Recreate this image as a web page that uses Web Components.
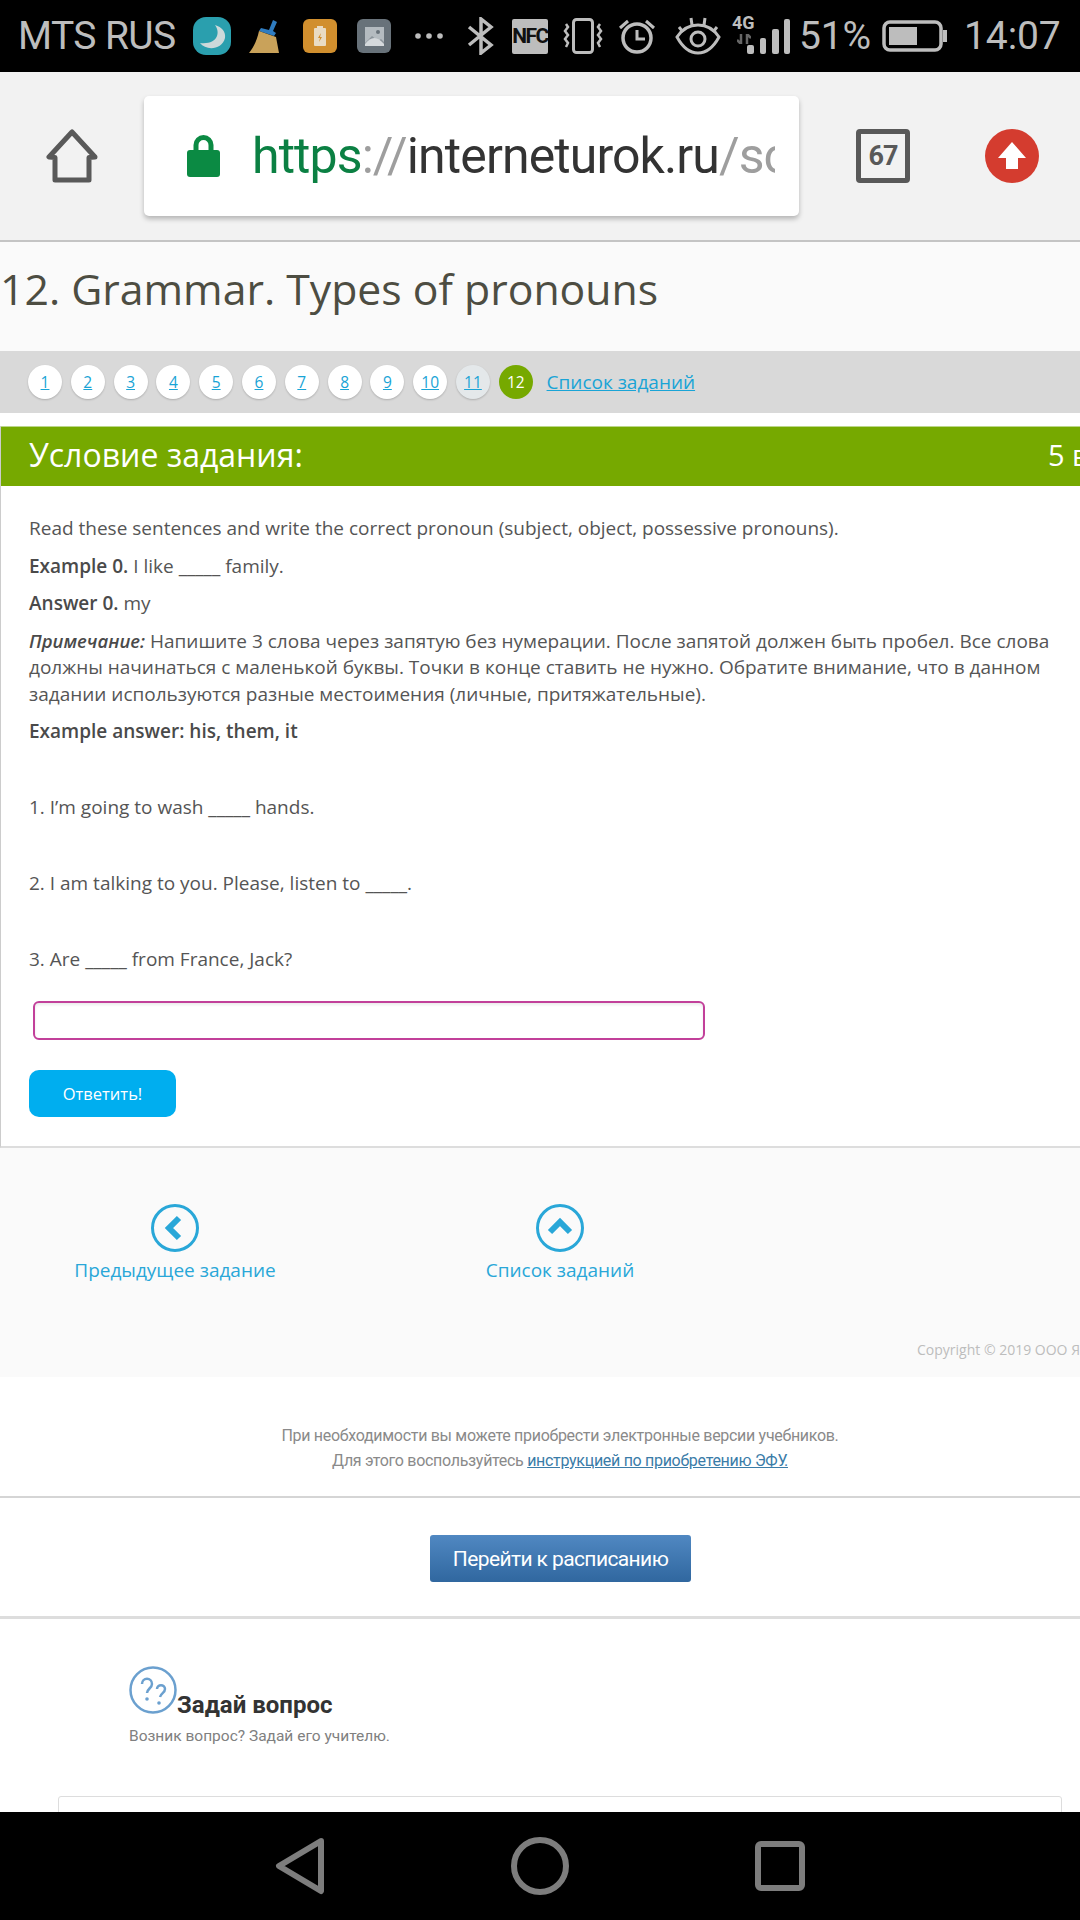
<!DOCTYPE html>
<html lang="ru">
<head>
<meta charset="utf-8">
<title>12. Grammar. Types of pronouns</title>
<style>
html,body{margin:0;padding:0;background:#fff;}
body{width:1080px;height:1920px;overflow:hidden;display:flex;flex-direction:column;font-family:"Open Sans","Noto Sans",sans-serif;}
main-area{flex:1;min-height:0;}
</style>
</head>
<body>
<status-bar></status-bar>
<browser-bar></browser-bar>
<main-area>
  <lesson-title>12. Grammar. Types of pronouns</lesson-title>
  <task-pager current="12" visited="11" total="12"></task-pager>
  <task-card></task-card>
  <task-nav></task-nav>
  <copy-line>Copyright © 2019 ООО Я</copy-line>
  <site-footer></site-footer>
</main-area>
<nav-bar></nav-bar>
<script>
// status bar of the phone
class StatusBar extends HTMLElement{
    constructor(){
        super();
        this.attachShadow({mode:'open'});
    }
    connectedCallback(){
        this.shadowRoot.innerHTML = `
        <style>
        :host{display:flex;height:72px;background:#000;color:#bdbdbd;align-items:center;font-family:Roboto,sans-serif;font-size:39px;overflow:hidden;}
        span{white-space:nowrap;display:block;}
        svg{display:block;flex:none;}
        .carrier{margin-left:18px;width:160px;letter-spacing:-.6px;}
        .nfc{flex:none;margin-left:17px;width:36px;height:35px;background:#bdbdbd;border-radius:2px;color:#111;font-weight:700;font-size:21px;line-height:35px;text-align:center;letter-spacing:-1.500px;overflow:hidden;}
        .net{flex:none;width:26px;margin-left:11px;margin-top:-13px;}
        .net span{font-size:18px;font-weight:700;line-height:16px;}
        </style>
        <span class="carrier">MTS RUS</span>
        <svg width="38" height="38" viewBox="0 0 38 38" style="margin-left:15px"><rect width="38" height="38" rx="13" fill="#2a9fae"/><path d="M22 8c6 8 2 20-15 18 6 8 22 7 25-5 1-6-3-11-10-13z" fill="#cdd9da"/></svg>
        <svg width="33" height="33" viewBox="0 0 33 33" style="margin-left:18px"><path d="M24 0l4 2-4 9 3 2-2 3-15-5 2-3 8 2z" fill="#2f7cc0"/><path d="M10 11l17 6 3 16H0c4-5 8-12 10-22z" fill="#c9a25a"/></svg>
        <svg width="34" height="34" viewBox="0 0 34 34" style="margin-left:21px"><rect width="34" height="34" rx="6" fill="#d18f2e"/><rect x="11" y="9" width="12" height="18" rx="1" fill="#e9dcc4"/><rect x="14" y="7" width="6" height="2" fill="#e9dcc4"/><path d="M18 14l-3 5h2l-1 4 3-5h-2z" fill="#d18f2e"/></svg>
        <svg width="34" height="34" viewBox="0 0 34 34" style="margin-left:20px"><rect width="34" height="34" rx="6" fill="#68727a"/><rect x="8" y="8" width="19" height="19" fill="#b4bbc0"/><path d="M8 24l7-7 6 5 3-2 3 3v4H8z" fill="#68727a" opacity=".55"/><path d="M8 25q9-12 19 0v2H8z" fill="#d5d9dc"/><circle cx="21" cy="13" r="2" fill="#68727a"/></svg>
        <svg width="28" height="6" viewBox="0 0 28 6" style="margin-left:24px"><circle cx="3" cy="3" r="2.800" fill="#bdbdbd"/><circle cx="14" cy="3" r="2.800" fill="#bdbdbd"/><circle cx="25" cy="3" r="2.800" fill="#bdbdbd"/></svg>
        <svg width="28" height="38" viewBox="0 0 28 38" style="margin-left:24px"><path d="M2 10l22 18-10 8V2l10 8L2 28" fill="none" stroke="#bdbdbd" stroke-width="3.500"/></svg>
        <div class="nfc">NFC</div>
        <svg width="40" height="36" viewBox="0 0 40 36" style="margin-left:15px"><rect x="10.500" y="1.500" width="19" height="33" rx="3" fill="none" stroke="#bdbdbd" stroke-width="3"/><path d="M3 6l2 3-3 4 3 4-3 4 3 4-2 4M37 6l-2 3 3 4-3 4 3 4-3 4 2 4" fill="none" stroke="#bdbdbd" stroke-width="2.500"/></svg>
        <svg width="36" height="36" viewBox="0 0 36 36" style="margin-left:16px"><circle cx="18" cy="20" r="14" fill="none" stroke="#bdbdbd" stroke-width="3.500"/><path d="M18 12v9h8M1 10l8-7M35 10l-8-7" fill="none" stroke="#bdbdbd" stroke-width="3"/></svg>
        <svg width="46" height="38" viewBox="0 0 46 38" style="margin-left:20px"><path d="M2 20c6-9 13-12 21-12s15 3 21 12c-6 11-13 16-21 16S8 31 2 20z" fill="none" stroke="#bdbdbd" stroke-width="3"/><circle cx="23" cy="22" r="7" fill="none" stroke="#bdbdbd" stroke-width="3"/><path d="M4 10l4 5M16 1l1 7M30 1l-1 7M42 10l-4 5" stroke="#bdbdbd" stroke-width="3"/></svg>
        <div class="net"><span>4G</span><svg width="14" height="10" viewBox="0 0 14 10" style="margin:3px 0 0 5px"><path d="M4 0v10L0 6M10 10V0l4 4" fill="none" stroke="#666" stroke-width="2.500"/></svg></div>
        <svg width="43" height="35" viewBox="0 0 43 35" style="margin-left:-11px"><rect y="26" width="7" height="9" rx="2" fill="#bdbdbd"/><rect x="13" y="19" width="6" height="16" rx="2" fill="#bdbdbd"/><rect x="25" y="10" width="7" height="25" rx="2" fill="#bdbdbd"/><rect x="37" y="0" width="6" height="35" rx="2" fill="#bdbdbd"/></svg>
        <span style="margin-left:9px;width:71px;letter-spacing:-.2px">51%</span>
        <svg width="66" height="32" viewBox="0 0 66 32" style="margin-left:12px"><rect x="2" y="2" width="57" height="28" rx="6" fill="none" stroke="#bdbdbd" stroke-width="3.500"/><rect x="7" y="7" width="28" height="18" fill="#bdbdbd"/><rect x="61" y="10" width="4" height="12" fill="#bdbdbd"/></svg>
        <span style="margin-left:16px;letter-spacing:-.1px">14:07</span>`;
    }
}
customElements.define('status-bar',StatusBar);

// toolbar of the browser with address
class BrowserBar extends HTMLElement{
    constructor(){
        super();
        this.attachShadow({mode:'open'});
    }
    connectedCallback(){
        this.shadowRoot.innerHTML = `
        <style>
        :host{display:flex;height:170px;box-sizing:border-box;background:#f2f2f2;border-bottom:2px solid #c4c4c4;align-items:center;font-family:Roboto,sans-serif;}
        svg{display:block;flex:none;}
        .url{width:655px;height:120px;box-sizing:border-box;margin-left:45px;background:#fff;border-radius:5px;box-shadow:0 3px 5px rgba(0,0,0,.25);display:flex;align-items:center;padding-left:43px;}
        .text{width:523px;margin-left:32px;overflow:hidden;white-space:nowrap;font-size:50px;letter-spacing:-.9px;color:#333;}
        .g{color:#0b8043}
        .l{color:#9e9e9e}
        .tabs{margin-left:57px;width:54px;height:54px;box-sizing:border-box;border:5px solid #595959;border-radius:4px;display:flex;align-items:center;justify-content:center;font-weight:700;font-size:27px;letter-spacing:-1px;color:#595959;}
        </style>
        <svg width="54" height="54" viewBox="0 0 54 54" style="margin-left:45px"><path d="M27 3L4 28l6 .5V51h34V28.500l6-.5z" fill="none" stroke="#595959" stroke-width="5" stroke-linejoin="round"/></svg>
        <div class="url">
          <svg width="33" height="42" viewBox="0 0 33 42"><path d="M9 17V10a7.500 7.500 0 0 1 15 0v7" fill="none" stroke="#0b8a43" stroke-width="5"/><rect y="15" width="33" height="27" rx="3" fill="#0b8a43"/></svg>
          <div class="text"><span class="g">https</span><span class="l">://</span>interneturok.ru<span class="l">/sc</span></div>
        </div>
        <div class="tabs">67</div>
        <svg width="54" height="54" viewBox="0 0 54 54" style="margin-left:75px"><circle cx="27" cy="27" r="27" fill="#d43c2f"/><path d="M27 13L41 29H33V40H21V29H13z" fill="#fff"/></svg>`;
    }
}
customElements.define('browser-bar',BrowserBar);

class LessonTitle extends HTMLElement{
    constructor(){
        super();
        this.attachShadow({mode:'open'});
        this.shadowRoot.innerHTML = `
        <style>
        :host{display:block;height:109px;background:#fafafa;box-sizing:border-box;padding:18px 0 0 0;}
        h1{margin:0;font-weight:400;font-size:42.750px;line-height:58px;color:#4d4d42;white-space:nowrap;}
        </style>
        <h1><slot></slot></h1>`;
    }
}
customElements.define('lesson-title',LessonTitle);

class TaskPager extends HTMLElement{
    constructor(){
        super();
        this.attachShadow({mode:'open'});
    }
    connectedCallback(){
        let total = +this.getAttribute('total');
        let current = +this.getAttribute('current');
        let visited = +this.getAttribute('visited');
        let items = '';
        for(let i=1;i<=total;i++){
            let cls = i===current ? 'on' : (i===visited ? 'seen' : '');
            items += `<a class="${cls}">${i}</a>`;
        }
        this.shadowRoot.innerHTML = `
        <style>
        :host{display:flex;height:62px;background:#d9d9d9;align-items:center;padding-left:28px;gap:8.800px;margin-bottom:13px;}
        a{display:flex;flex:none;width:34px;height:34px;border-radius:50%;background:#fff;box-shadow:0 1px 2px rgba(0,0,0,.2);align-items:center;justify-content:center;color:#19a4d6;text-decoration:underline;font-size:15.500px;}
        a.seen{background:#e4e8ea}
        a.on{background:#76a900;color:#fff;text-decoration:none;box-shadow:none}
        .all{margin-left:5px;font-size:19px;color:#19a4d6;text-decoration:underline;white-space:nowrap;}
        </style>
        ${items}<span class="all">Список заданий</span>`;
    }
}
customElements.define('task-pager',TaskPager);

class TaskCard extends HTMLElement{
    constructor(){
        super();
        this.attachShadow({mode:'open'});
        this.shadowRoot.innerHTML = `
        <style>
        :host{display:block;background:#fff;border-left:1px solid #ccc;border-bottom:2px solid #ddd;color:#555;font-size:19px;line-height:26.500px;}
        .head{height:60px;background:#76a900;color:#fff;display:flex;align-items:center;padding:0 0 2px 28px;font-size:32px;white-space:nowrap;overflow:hidden;border-top:1px solid #bcd68a;box-sizing:border-box;}
        .head span:first-child{flex:none;width:1019px;}
        .head span:last-child{flex:none;font-size:29px;}
        .body{padding:29px 20px 30px 28px;height:660px;box-sizing:border-box;width:1079px;}
        p{margin:0 0 11px 0;}
        b{color:#4a4a4a;font-weight:600;}
        i{font-size:18.500px;}
        .q{margin:0 0 49.500px 0;}
        input{display:block;box-sizing:border-box;width:672px;height:39px;margin:-21px 0 30px 4px;padding:0;border:2px solid #c2409a;border-radius:6px;background:#fff;outline:none;box-shadow:inset 0 2px 3px rgba(0,0,0,.08);}
        button{display:block;width:147px;height:47px;background:#00aeef;color:#fff;border:0;border-radius:10px;font:16.500px "Open Sans",sans-serif;}
        </style>
        <div class="head"><span>Условие задания:</span><span>5 вопросов</span></div>
        <div class="body">
          <p>Read these sentences and write the correct pronoun (subject, object, possessive pronouns).</p>
          <p><b>Example 0.</b> I like _____ family.</p>
          <p><b>Answer 0.</b> my</p>
          <p><b><i>Примечание:</i></b> Напишите 3 слова через запятую без нумерации. После запятой должен быть пробел. Все слова должны начинаться с маленькой буквы. Точки в конце ставить не нужно. Обратите внимание, что в данном задании используются разные местоимения (личные, притяжательные).</p>
          <p class="q"><b>Example answer: his, them, it</b></p>
          <p class="q">1. I’m going to wash _____ hands.</p>
          <p class="q">2. I am talking to you. Please, listen to _____.</p>
          <p class="q">3. Are _____ from France, Jack?</p>
          <input type="text" aria-label="Ответ">
          <button>Ответить!</button>
        </div>`;
    }
}
customElements.define('task-card',TaskCard);

class TaskNav extends HTMLElement{
    constructor(){
        super();
        this.attachShadow({mode:'open'});
        this.shadowRoot.innerHTML = `
        <style>
        :host{display:flex;height:190px;background:#fafafa;box-sizing:border-box;padding-top:56px;font-size:19px;color:#29a7d8;}
        div{display:flex;flex-direction:column;align-items:center;gap:5px;white-space:nowrap;line-height:26px;}
        svg{display:block;}
        </style>
        <div style="width:350px"><svg width="48" height="48" viewBox="0 0 48 48"><circle cx="24" cy="24" r="22.500" fill="none" stroke="#29a7d8" stroke-width="3"/><path d="M28 14L18 24l10 10" fill="none" stroke="#29a7d8" stroke-width="6"/></svg><span>Предыдущее задание</span></div>
        <div style="width:420px"><svg width="48" height="48" viewBox="0 0 48 48"><circle cx="24" cy="24" r="22.500" fill="none" stroke="#29a7d8" stroke-width="3"/><path d="M14 28l10-10 10 10" fill="none" stroke="#29a7d8" stroke-width="6"/></svg><span>Список заданий</span></div>`;
    }
}
customElements.define('task-nav',TaskNav);

class CopyLine extends HTMLElement{
    constructor(){
        super();
        this.attachShadow({mode:'open'});
        this.shadowRoot.innerHTML = `
        <style>
        :host{display:block;height:39px;background:#fafafa;box-sizing:border-box;padding:2px 0 0 917px;font-size:14px;line-height:20px;color:#bdbdbd;white-space:nowrap;overflow:hidden;}
        </style>
        <slot></slot>`;
    }
}
customElements.define('copy-line',CopyLine);

class SiteFooter extends HTMLElement{
    constructor(){
        super();
        this.attachShadow({mode:'open'});
        this.shadowRoot.innerHTML = `
        <style>
        :host{display:block;background:#fff;color:#8a8a8a;overflow:hidden;font-family:Roboto,sans-serif;}
        .note{height:121px;box-sizing:border-box;padding:46px 0 0 0;width:1120px;text-align:center;font-size:16px;letter-spacing:-.3px;line-height:25px;border-bottom:2px solid #d5d5d5;}
        .note a{color:#3a7ca8;text-decoration:underline;}
        .go{height:121px;box-sizing:border-box;padding:37px 0 0 430px;border-bottom:3px solid #ddd;}
        .go span{display:flex;width:261px;height:47px;align-items:center;justify-content:center;border-radius:3px;background:linear-gradient(#5088c2,#30679f);color:#fff;font-size:21px;letter-spacing:-.6px;}
        .ask{padding:47px 0 0 129px;}
        .t{display:flex;align-items:flex-end;}
        .t svg{display:block;flex:none;}
        .t b{font-size:24px;line-height:32px;color:#333;font-weight:700;margin-bottom:-7px;}
        .s{font-size:15.500px;line-height:22px;color:#808080;margin-top:11px;}
        .box{margin:49px 18px 0 58px;height:40px;border:1px solid #ddd;border-radius:3px;}
        </style>
        <div class="note">При необходимости вы можете приобрести электронные версии учебников.<br>Для этого воспользуйтесь <a>инструкцией по приобретению ЭФУ.</a></div>
        <div class="go"><span>Перейти к расписанию</span></div>
        <div class="ask">
          <div class="t"><svg width="48" height="48" viewBox="0 0 48 48"><circle cx="24" cy="24" r="22.500" fill="none" stroke="#6ba0cf" stroke-width="2.500"/><path d="M13 18c0-7 10-7 10 0 0 4-5 5-5 9M28 23c0-5 8-5 8 0 0 4-4 4-5 8" fill="none" stroke="#6ba0cf" stroke-width="2.500"/><circle cx="18" cy="33" r="1.800" fill="#6ba0cf"/><circle cx="30" cy="37" r="1.800" fill="#6ba0cf"/></svg><b>Задай вопрос</b></div>
          <div class="s">Возник вопрос? Задай его учителю.</div>
        </div>
        <div class="box"></div>`;
    }
}
customElements.define('site-footer',SiteFooter);

class NavBar extends HTMLElement{
    constructor(){
        super();
        this.attachShadow({mode:'open'});
        this.shadowRoot.innerHTML = `
        <style>
        :host{display:flex;flex:none;height:108px;background:#000;align-items:center;justify-content:center;gap:186px;}
        svg{display:block;}
        </style>
        <svg width="50" height="58" viewBox="0 0 50 58"><path d="M46 4L4 29l42 25z" fill="none" stroke="#7d7d7d" stroke-width="6" stroke-linejoin="round"/></svg>
        <svg width="58" height="58" viewBox="0 0 58 58"><circle cx="29" cy="29" r="26" fill="none" stroke="#7d7d7d" stroke-width="6"/></svg>
        <svg width="50" height="50" viewBox="0 0 50 50"><rect x="3" y="3" width="44" height="44" rx="3" fill="none" stroke="#7d7d7d" stroke-width="6"/></svg>`;
    }
}
customElements.define('nav-bar',NavBar);
</script>
</body>
</html>
